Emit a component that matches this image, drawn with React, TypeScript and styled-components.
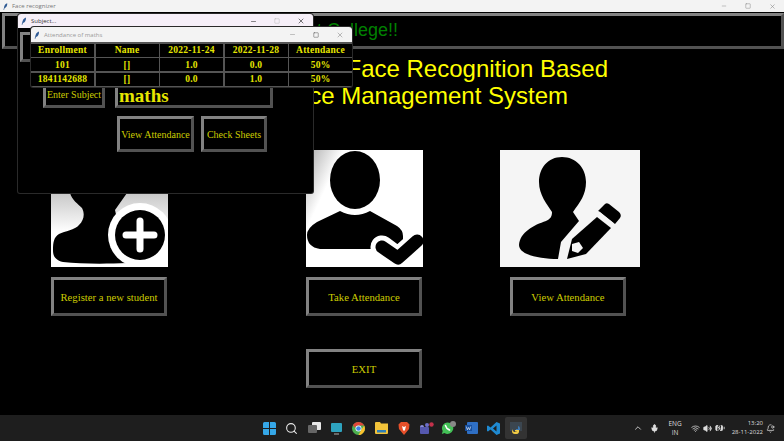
import React from 'react'
import styled, { createGlobalStyle } from 'styled-components'
import { Minus, Square, X, Search, ChevronUp, Mic, Volume2, Wifi, BatteryCharging, BellDot } from 'lucide-react'

const GlobalStyle = createGlobalStyle`
  html, body { margin: 0; padding: 0; background: #000; }
  #root { width: 784px; height: 441px; }
`

const Desktop = styled.div`
  position: relative;
  width: 784px;
  height: 441px;
  overflow: hidden;
  display: flex;
  flex-direction: column;
  background: #000;
  font-family: "Liberation Serif", serif;
`

const TitleBar = styled.div<{ $bg: string; $h: number; $color: string }>`
  height: ${p => p.$h}px;
  flex: none;
  display: flex;
  align-items: center;
  background: ${p => p.$bg};
  color: ${p => p.$color};
  font: 6px "Open Sans", sans-serif;
  padding-left: 2px;
  gap: 3px;
`

const TitleText = styled.span`
  flex: 1;
  white-space: nowrap;
`

const Controls = styled.div<{ $gap: number; $right: number; $color: string }>`
  display: flex;
  align-items: center;
  gap: ${p => p.$gap}px;
  padding-right: ${p => p.$right}px;
  color: ${p => p.$color};
`

const MainWindow = styled.div`
  flex: 1;
  display: flex;
  flex-direction: column;
  min-height: 0;
  background: #000;
`

const BevelBox = styled.div`
  box-sizing: border-box;
  border-style: solid;
  border-width: 3px;
  border-color: #828282 #525252 #525252 #828282;
  background: #000;
`

const Banner = styled(BevelBox)`
  height: 36px;
  margin: 1px 0 0 2px;
  padding: 0 0 2px 312px;
  display: flex;
  align-items: center;
  color: #008000;
  font: 18px "Liberation Sans", sans-serif;
  white-space: nowrap;
  overflow: hidden;
`

const HeadingBlock = styled.div`
  width: 608px;
  margin-top: 6px;
  height: 95px;
  color: #ffff00;
  font: 24px/27px "Liberation Sans", sans-serif;
  text-align: right;
  white-space: nowrap;
`

const HeadingLine = styled.div<{ $inset: number }>`
  padding-right: ${p => p.$inset}px;
`

const Features = styled.div`
  display: grid;
  grid-template-columns: 255px 194px 140px;
  padding-left: 51px;
`

const Feature = styled.div`
  display: flex;
  flex-direction: column;
  gap: 10px;
`

const IconPanel = styled.div<{ $w: number; $bg: string }>`
  width: ${p => p.$w}px;
  height: 117px;
  background: ${p => p.$bg};
  svg { display: block; }
`

const ActionButton = styled(BevelBox)<{ $offset?: number }>`
  width: 116px;
  height: 39px;
  margin-left: ${p => p.$offset ?? 0}px;
  display: flex;
  align-items: center;
  justify-content: center;
  color: #cccc00;
  font-size: 10.7px;
  white-space: nowrap;
`

const ExitRow = styled.div`
  margin: 33px 0 0 306px;
`

const Taskbar = styled.div`
  height: 26px;
  flex: none;
  display: flex;
  align-items: center;
  background: #1e1e1e;
  color: #e8e8e8;
  padding-left: 258px;
`

const TaskSlot = styled.div<{ $active?: boolean }>`
  width: 22.45px;
  height: 22px;
  flex: none;
  display: flex;
  align-items: center;
  justify-content: center;
  border-radius: 2px;
  background: ${p => (p.$active ? '#333' : 'transparent')};
  svg { display: block; }
`

const Tray = styled.div`
  margin-left: auto;
  display: flex;
  align-items: center;
  gap: 3px;
  padding-right: 9px;
  font: 6px/9px "Open Sans", sans-serif;
  color: #ddd;
  svg.filled { fill: currentColor; }
`

const TrayMic = styled.span`
  display: flex;
  margin-left: 4px;
`

const TrayLang = styled.div`
  text-align: center;
  font-size: 6.5px;
  margin: 0 6px 0 6px;
`

const TrayClock = styled.div`
  text-align: right;
  margin: 0 0 0 4px;
`

const FloatingWindow = styled.div<{ $x: number; $y: number; $w: number; $h: number }>`
  position: absolute;
  left: ${p => p.$x}px;
  top: ${p => p.$y}px;
  width: ${p => p.$w}px;
  height: ${p => p.$h}px;
  box-sizing: border-box;
  display: flex;
  flex-direction: column;
  border-radius: 3px 3px 2px 2px;
  overflow: hidden;
  background: #000;
  box-shadow: 0 0 0 1px #2a2a2a;
`

const SubjectBody = styled.div`
  flex: 1;
  display: flex;
  flex-direction: column;
  padding: 4px 0 0 2px;
`

const SubjectBanner = styled(BevelBox)`
  height: 30px;
  width: 260px;
`

const SubjectRow = styled.div`
  display: flex;
  align-items: flex-end;
  gap: 10px;
  margin: 2px 0 0 23px;
  height: 44px;
`

const SubjectLabel = styled(BevelBox)`
  width: 62px;
  height: 40px;
  padding-bottom: 5px;
  display: flex;
  align-items: flex-end;
  justify-content: center;
  color: #cccc00;
  font-size: 10px;
  white-space: nowrap;
`

const SubjectEntry = styled(BevelBox)`
  width: 158px;
  height: 40px;
  padding-left: 1px;
  display: flex;
  align-items: flex-end;
  color: #e6e600;
  font-size: 19px;
  font-weight: bold;
  line-height: 19px;
`

const SubjectActions = styled.div`
  display: flex;
  gap: 7px;
  margin: 8px 0 0 97px;
`

const SubjectButton = styled(BevelBox)<{ $w: number }>`
  width: ${p => p.$w}px;
  height: 36px;
  display: flex;
  align-items: center;
  justify-content: center;
  color: #cccc00;
  font-size: 10px;
  white-space: nowrap;
`

const SheetTable = styled.div`
  flex: 1;
  display: grid;
  grid-template-columns: repeat(5, 1fr);
  grid-auto-rows: 1fr;
  gap: 1.5px;
  background: #555;
  padding: 1.5px 0 1px;
`

const SheetCell = styled.div`
  display: flex;
  align-items: center;
  justify-content: center;
  background: #000;
  color: #e6e600;
  font-size: 9.5px;
  font-weight: bold;
  letter-spacing: 0.25px;
  white-space: nowrap;
`

const rows = [
  ['Enrollment', 'Name', '2022-11-24', '2022-11-28', 'Attendance'],
  ['101', '[]', '1.0', '0.0', '50%'],
  ['1841142688', '[]', '0.0', '1.0', '50%'],
]

function Feather({ size }: { size: number }) {
  return (
    <svg width={size} height={size} viewBox="0 0 10 10">
      <path d="M7.5 0.5C5 1 3 4 2.8 7L2 9.5L3 9.6L3.6 7.6C6 7 7.8 4 7.5 0.5Z" fill="#2e5a94" />
    </svg>
  )
}

function AddStudentIcon() {
  return (
    <svg width="117" height="117" viewBox="0 0 117 117">
      <ellipse cx="47" cy="22" rx="27" ry="24" fill="#000" />
      <path
        d="M19 43C21 50 27 54 31 58C34 64 33 70 28 75C24 80 14 81 8 84C3 87 2 92 2 100C2 106 4 110 12 112C30 114 55 114 76 113L64 60L76 43Z"
        fill="#000"
      />
      <circle cx="89" cy="85" r="32" fill="#fff" />
      <circle cx="89" cy="85" r="25" fill="#000" />
      <path d="M89 71V99M75 85H103" stroke="#fff" strokeWidth="7" strokeLinecap="round" />
    </svg>
  )
}

function TakeAttendanceIcon() {
  return (
    <svg width="117" height="117" viewBox="0 0 117 117">
      <ellipse cx="49" cy="30" rx="25" ry="29" fill="#000" />
      <path d="M34 61Q49 69 64 61L91 76Q97 80 97 86L97 99L14 99Q1 97 1 85Q1 78 11 72Z" fill="#000" />
      <path d="M76 97L92 109L112 91" fill="none" stroke="#fff" strokeWidth="23" strokeLinecap="round" strokeLinejoin="round" />
      <path d="M76 97L92 108L111 91" fill="none" stroke="#000" strokeWidth="13" strokeLinecap="round" strokeLinejoin="round" />
    </svg>
  )
}

function EditStudentIcon() {
  return (
    <svg width="140" height="117" viewBox="0 0 140 117">
      <path
        d="M62 7C48 7 39 18 39 32C39 45 47 54 52 62C52 67 50 69 46 71C34 75 20 82 19 95C19 105 40 109 58 109L61 92L79 71L73 62C80 52 86 45 86 32C86 18 76 7 62 7Z"
        fill="#000"
      />
      <path d="M67 109L72 89L97 67L111 78L86 104Z" fill="#000" />
      <path d="M72 94L79 92L83 98L78 103L72 101Z" fill="#f5f5f5" />
      <path d="M100 62L115 74L120 68Q122 65 119 62L109 54Q106 52 104 55L98 61Z" fill="#000" />
      <path d="M98 62L113 74" stroke="#f5f5f5" strokeWidth="2" />
    </svg>
  )
}

function WindowsLogo() {
  return (
    <svg width="13" height="13" viewBox="0 0 13 13">
      <path d="M0 1.5Q0 0 1.5 0H6V6H0Z M7 0H11.5Q13 0 13 1.5V6H7Z M0 7H6V13H1.5Q0 13 0 11.5Z M7 7H13V11.5Q13 13 11.5 13H7Z" fill="#35a7e8" />
    </svg>
  )
}

function TaskViewIcon() {
  return (
    <svg width="13" height="12" viewBox="0 0 13 12">
      <rect x="4" y="0" width="9" height="8" rx="1" fill="#e8e8e8" />
      <rect x="0" y="3" width="9" height="8" rx="1" fill="#666" />
    </svg>
  )
}

function DesktopIcon() {
  return (
    <svg width="13" height="13" viewBox="0 0 13 13">
      <rect x="1" y="1" width="11" height="9" rx="1" fill="#2ea3bf" />
      <path d="M4 12H9" stroke="#888" strokeWidth="1.4" />
    </svg>
  )
}

function ChromeIcon() {
  return (
    <svg width="13" height="13" viewBox="0 0 13 13">
      <circle cx="6.5" cy="6.5" r="6.5" fill="#4caf50" />
      <path d="M6.5 0A6.5 6.5 0 0 1 12.2 3.5H6.5Q3.5 3.5 2.6 5.8L1 3Q3 0 6.5 0Z" fill="#e0453a" />
      <path d="M12.2 3.5A6.5 6.5 0 0 1 6.5 13L9.2 8Z" fill="#fbc02d" />
      <circle cx="6.5" cy="6.5" r="3" fill="#fff" />
      <circle cx="6.5" cy="6.5" r="2.3" fill="#3f84e8" />
    </svg>
  )
}

function FilesIcon() {
  return (
    <svg width="13" height="12" viewBox="0 0 13 12">
      <path d="M0 1Q0 0 1 0H5L6 1.5H13V11Q13 12 12 12H1Q0 12 0 11Z" fill="#f2c33a" />
      <rect x="2" y="8" width="9" height="2.5" fill="#2d7fb8" />
    </svg>
  )
}

function BraveIcon() {
  return (
    <svg width="12" height="13" viewBox="0 0 12 13">
      <path d="M3 0H9L11.5 2.5L11 7L6 13L1 7L0.5 2.5Z" fill="#e8502a" />
      <path d="M4 4L6 5L8 4L7 8L6 9L5 8Z" fill="#fff" />
    </svg>
  )
}

function TeamsIcon() {
  return (
    <svg width="15" height="13" viewBox="0 0 15 13">
      <circle cx="8" cy="3" r="2" fill="#6d70c9" />
      <circle cx="3" cy="5" r="2" fill="#8b8ede" />
      <rect x="1" y="5" width="9" height="7" rx="1" fill="#5558af" />
      <circle cx="12.5" cy="2.5" r="2.2" fill="#c4314b" />
    </svg>
  )
}

function WhatsAppIcon() {
  return (
    <svg width="15" height="14" viewBox="0 0 15 14">
      <path d="M6.5 1.5A5.7 5.7 0 1 1 3.5 12L0.8 13L1.7 10A5.7 5.7 0 0 1 6.5 1.5Z" fill="#43c057" />
      <path d="M4.5 4.5L6 7.5L8.5 9" fill="none" stroke="#fff" strokeWidth="1.6" strokeLinecap="round" />
      <circle cx="12" cy="3" r="3" fill="#888" />
    </svg>
  )
}

function WordIcon() {
  return (
    <svg width="13" height="12" viewBox="0 0 13 12">
      <rect x="2" y="0" width="11" height="12" rx="1" fill="#2f6fc4" />
      <rect x="0" y="3" width="7" height="6" fill="#174f9e" />
      <path d="M1.3 4.5L2.4 7.8L3.5 5.5L4.6 7.8L5.7 4.5" fill="none" stroke="#fff" strokeWidth="0.6" />
    </svg>
  )
}

function VSCodeIcon() {
  return (
    <svg width="13" height="13" viewBox="0 0 13 13">
      <path d="M9.5 0L13 1.5V11.5L9.5 13L3.5 7.5L1 9.5L0 9V4L1 3.5L3.5 5.5ZM9.5 3.5L6 6.5L9.5 9.5Z" fill="#1f8ad2" fillRule="evenodd" />
    </svg>
  )
}

function PythonAppIcon() {
  return (
    <svg width="14" height="14" viewBox="0 0 14 14">
      <rect x="1" y="1" width="12" height="9" fill="#3b4650" />
      <path d="M5 5H9V8H7V9H11V7.5Q11 5 9 5Z" fill="#3d7ab3" />
      <path d="M3.5 8Q3.5 11 6 11H8V13H6Q3 13 3 10Z M6 9H10Q10.5 13 7.5 13V10.5H6Z" fill="#f2cb44" />
    </svg>
  )
}

const taskIcons = [
  <WindowsLogo />,
  <Search size={13} color="#e8e8e8" />,
  <TaskViewIcon />,
  <DesktopIcon />,
  <ChromeIcon />,
  <FilesIcon />,
  <BraveIcon />,
  <TeamsIcon />,
  <WhatsAppIcon />,
  <WordIcon />,
  <VSCodeIcon />,
  <PythonAppIcon />,
]

export default function App() {
  return (
    <Desktop>
      <GlobalStyle />
      <TitleBar $bg="#f3f3f3" $h={12} $color="#777">
        <Feather size={7} />
        <TitleText>Face recognizer</TitleText>
        <Controls $gap={18} $right={8} $color="#888">
          <Minus size={6} />
          <Square size={6} />
          <X size={7} />
        </Controls>
      </TitleBar>
      <MainWindow>
        <Banner>t College!!</Banner>
        <HeadingBlock>
          <HeadingLine $inset={0}>Face Recognition Based</HeadingLine>
          <HeadingLine $inset={40}>ce Management System</HeadingLine>
        </HeadingBlock>
        <Features>
          <Feature>
            <IconPanel $w={117} $bg="linear-gradient(#999 0%, #c8c8c8 37%, #fff 70%)">
              <AddStudentIcon />
            </IconPanel>
            <ActionButton>Register a new student</ActionButton>
          </Feature>
          <Feature>
            <IconPanel $w={117} $bg="linear-gradient(115deg, #aaa 0%, #fff 22%)">
              <TakeAttendanceIcon />
            </IconPanel>
            <ActionButton>Take Attendance</ActionButton>
          </Feature>
          <Feature>
            <IconPanel $w={140} $bg="#f5f5f5">
              <EditStudentIcon />
            </IconPanel>
            <ActionButton $offset={10}>View Attendance</ActionButton>
          </Feature>
        </Features>
        <ExitRow>
          <ActionButton>EXIT</ActionButton>
        </ExitRow>
      </MainWindow>
      <Taskbar>
        {taskIcons.map((icon, i) => (
          <TaskSlot key={i} $active={i === taskIcons.length - 1}>
            {icon}
          </TaskSlot>
        ))}
        <Tray>
          <ChevronUp size={10} />
          <TrayMic><Mic size={9} className="filled" /></TrayMic>
          <TrayLang>ENG<br />IN</TrayLang>
          <Wifi size={9} />
          <Volume2 size={9} className="filled" />
          <BatteryCharging size={10} className="filled" />
          <TrayClock>13:20<br />28-11-2022</TrayClock>
          <BellDot size={9} />
        </Tray>
      </Taskbar>

      <FloatingWindow $x={18} $y={14} $w={295} $h={179}>
        <TitleBar $bg="#f6eff8" $h={14} $color="#333">
          <Feather size={8} />
          <TitleText>Subject...</TitleText>
          <Controls $gap={17} $right={8} $color="#333">
            <Minus size={7} />
            <Square size={6} color="#bbb" />
            <X size={8} />
          </Controls>
        </TitleBar>
        <SubjectBody>
          <SubjectBanner />
          <SubjectRow>
            <SubjectLabel>Enter Subject</SubjectLabel>
            <SubjectEntry>maths</SubjectEntry>
          </SubjectRow>
          <SubjectActions>
            <SubjectButton $w={77}>View Attendance</SubjectButton>
            <SubjectButton $w={66}>Check Sheets</SubjectButton>
          </SubjectActions>
        </SubjectBody>
      </FloatingWindow>

      <FloatingWindow $x={31} $y={27} $w={321} $h={60}>
        <TitleBar $bg="#f3f3f3" $h={15} $color="#999">
          <Feather size={8} />
          <TitleText>Attendance of maths</TitleText>
          <Controls $gap={17} $right={8} $color="#999">
            <Minus size={7} />
            <Square size={6} color="#555" />
            <X size={8} />
          </Controls>
        </TitleBar>
        <SheetTable>
          {rows.flat().map((cell, i) => (
            <SheetCell key={i}>{cell}</SheetCell>
          ))}
        </SheetTable>
      </FloatingWindow>
    </Desktop>
  )
}
